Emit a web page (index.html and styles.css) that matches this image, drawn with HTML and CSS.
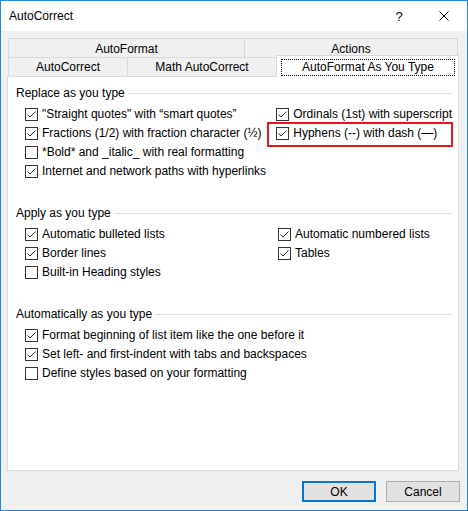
FILE: index.html
```html
<!DOCTYPE html>
<html lang="en">
<head>
<meta charset="utf-8">
<title>AutoCorrect</title>
<link rel="stylesheet" href="styles.css">
</head>
<body>
<div class="window">
  <div class="titlebar">
    <span class="title">AutoCorrect</span>
    <span class="caption-btn help">?</span>
    <span class="caption-btn close">
      <svg width="10" height="10" viewBox="0 0 10 10"><path d="M0.5 0.5 L9.5 9.5 M9.5 0.5 L0.5 9.5" stroke="#000" stroke-width="1" fill="none"/></svg>
    </span>
  </div>

  <div class="content">
    <div class="tabs">
      <div class="tab-row tab-row-back">
        <div class="tab tab-autoformat">AutoFormat</div>
        <div class="tab tab-actions">Actions</div>
      </div>
      <div class="tab-row tab-row-front">
        <div class="tab tab-autocorrect">AutoCorrect</div>
        <div class="tab tab-math">Math AutoCorrect</div>
        <div class="tab tab-selected"><span class="focus-rect">AutoFormat As You Type</span></div>
      </div>
    </div>

    <div class="panel">
      <section class="group">
        <div class="group-title"><span>Replace as you type</span><span class="rule"></span></div>
        <div class="cols">
          <div class="col col-left">
            <label class="check on"><span class="box"></span>"Straight quotes" with “smart quotes”</label>
            <label class="check on"><span class="box"></span>Fractions (1/2) with fraction character (½)</label>
            <label class="check"><span class="box"></span>*Bold* and _italic_ with real formatting</label>
            <label class="check on"><span class="box"></span>Internet and network paths with hyperlinks</label>
          </div>
          <div class="col">
            <label class="check on"><span class="box"></span>Ordinals (1st) with superscript</label>
            <label class="check on marked"><span class="box"></span>Hyphens (--) with dash (—)</label>
          </div>
        </div>
      </section>

      <section class="group">
        <div class="group-title"><span>Apply as you type</span><span class="rule"></span></div>
        <div class="cols">
          <div class="col col-left">
            <label class="check on"><span class="box"></span>Automatic bulleted lists</label>
            <label class="check on"><span class="box"></span>Border lines</label>
            <label class="check"><span class="box"></span>Built-in Heading styles</label>
          </div>
          <div class="col">
            <label class="check on"><span class="box"></span>Automatic numbered lists</label>
            <label class="check on"><span class="box"></span>Tables</label>
          </div>
        </div>
      </section>

      <section class="group">
        <div class="group-title"><span>Automatically as you type</span><span class="rule"></span></div>
        <div class="cols">
          <div class="col">
            <label class="check on"><span class="box"></span>Format beginning of list item like the one before it</label>
            <label class="check on"><span class="box"></span>Set left- and first-indent with tabs and backspaces</label>
            <label class="check"><span class="box"></span>Define styles based on your formatting</label>
          </div>
        </div>
      </section>
    </div>

    <div class="buttons">
      <button class="btn btn-default">OK</button>
      <button class="btn">Cancel</button>
    </div>
  </div>
</div>
</body>
</html>
```

FILE: styles.css
```css
* {
  box-sizing: border-box;
}

html, body {
  margin: 0;
  padding: 0;
  background: #ffffff;
}

body {
  font-family: "Liberation Sans", Arial, sans-serif;
  font-size: 12px;
  color: #000;
}

.window {
  width: 468px;
  height: 511px;
  border: 1px solid #1b87e3;
  display: flex;
  flex-direction: column;
  background: #f0f0f0;
}

/* caption bar */
.titlebar {
  height: 30px;
  background: #ffffff;
  display: flex;
  align-items: center;
  padding-left: 8px;
}

.title {
  flex: 1;
  line-height: 30px;
}

.caption-btn {
  width: 46px;
  height: 30px;
  display: flex;
  align-items: center;
  justify-content: center;
}

.help {
  font-size: 13px;
  padding-left: 2px;
}

.close svg {
  display: block;
}

/* dialog body */
.content {
  flex: 1;
  padding: 7px 7px 0 6px;
  display: flex;
  flex-direction: column;
}

.tabs {
  display: flex;
  flex-direction: column;
}

.tab-row {
  display: flex;
  align-items: flex-end;
  height: 19px;
}

.tab {
  height: 19px;
  border: 1px solid #d9d9d9;
  border-bottom: none;
  background: #f0f0f0;
  text-align: center;
  line-height: 17px;
}

.tab-row-back .tab {
  padding-top: 2px;
}

.tab-row-front .tab {
  padding-top: 1px;
}

.tab + .tab {
  margin-left: -1px;
}

.tab-autoformat { width: 237px; margin-left: 1px; }
.tab-actions { width: 214px; }
.tab-autocorrect { width: 120px; margin-left: 1px; }
.tab-math { width: 150px; }

.tab-row-front .tab-selected {
  position: relative;
  z-index: 1;
  width: 183px;
  height: 22px;
  margin-bottom: -1px;
  background: #ffffff;
  padding: 3px 3px 0 4px;
  line-height: 15px;
}

.focus-rect {
  display: block;
  height: 17px;
  border: 1px dotted #000;
}

.panel {
  height: 395px;
  width: 452px;
  background: #ffffff;
  border: 1px solid #d9d9d9;
  padding: 7px 6px 0 8px;
}

.group {
  margin-bottom: 23px;
}

.group-title {
  display: flex;
  align-items: center;
  height: 19px;
  line-height: 19px;
  margin-bottom: 2px;
}

.rule {
  flex: 1;
  height: 1px;
  background: #dcdcdc;
  margin-left: 3px;
}

.cols {
  display: flex;
  padding-left: 9px;
}

.col {
  display: flex;
  flex-direction: column;
}

.col-left {
  width: 253px;
}

.check {
  position: relative;
  display: flex;
  align-items: center;
  height: 19px;
  line-height: 19px;
  white-space: nowrap;
}

.box {
  width: 13px;
  height: 13px;
  margin-right: 4px;
  border: 1px solid #333333;
  background: #ffffff no-repeat center;
  flex: none;
}

.check.on .box {
  background-image: url("data:image/svg+xml;utf8,<svg xmlns='http://www.w3.org/2000/svg' width='11' height='11' viewBox='0 0 11 11'><polyline points='1.5,5.5 4,8 9.5,2.5' fill='none' stroke='%23333333' stroke-width='1'/></svg>");
}

/* red callout around one option */
.marked::after {
  content: "";
  position: absolute;
  left: -9px;
  top: -2px;
  width: 182px;
  height: 21px;
  border: 2px solid #e3151f;
}

.buttons {
  display: flex;
  justify-content: flex-end;
  gap: 10px;
  margin-top: 10px;
}

.btn {
  width: 74px;
  height: 21px;
  padding: 0;
  margin: 0;
  font-family: inherit;
  font-size: 12px;
  color: #000;
  background: #e1e1e1;
  border: 1px solid #adadad;
}

.btn-default {
  border: 2px solid #0078d7;
}
```
